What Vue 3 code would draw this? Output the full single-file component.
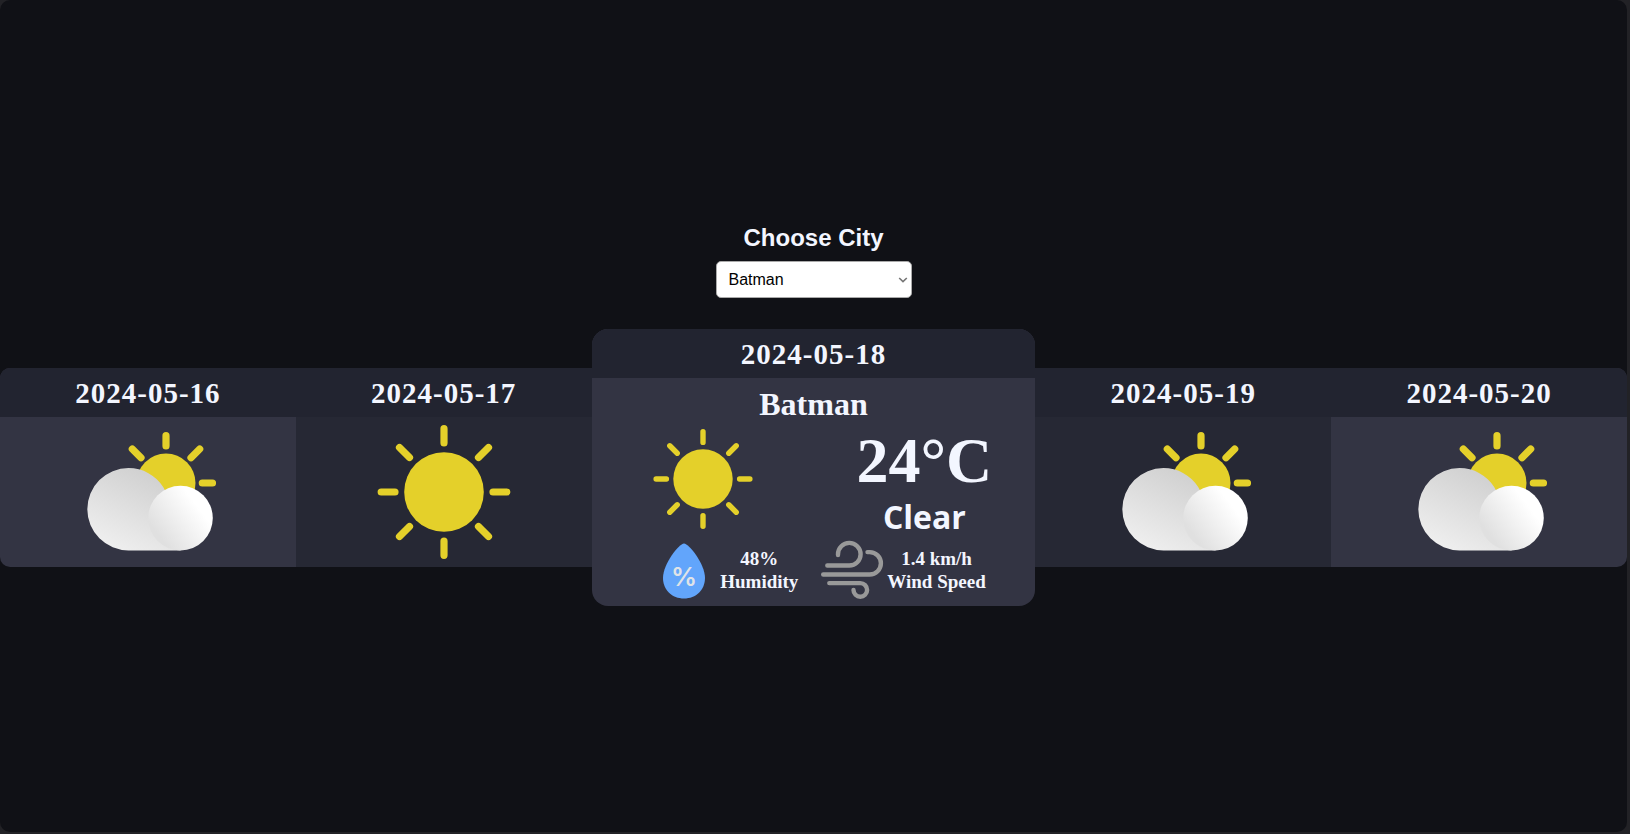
<script setup>
import { ref } from 'vue'

const cities = ['Batman', 'Ankara', 'Istanbul', 'Izmir']
const city = ref('Batman')

const days = [
  { date: '2024-05-16', icon: 'cloudy' },
  { date: '2024-05-17', icon: 'sunny' },
  { date: '2024-05-18', icon: 'sunny', current: true },
  { date: '2024-05-19', icon: 'cloudy' },
  { date: '2024-05-20', icon: 'cloudy' },
]
</script>

<template>
  <div class="frame">
    <main class="page">
      <label class="title" for="city">Choose City</label>
      <div class="select-wrap">
        <select id="city" v-model="city" class="city-select">
          <option v-for="name in cities" :key="name" :value="name">{{ name }}</option>
        </select>
        <svg class="chevron" viewBox="0 0 10 6" aria-hidden="true">
          <path d="M1.200 1L5 4.600L8.800 1" fill="none" stroke="#767676" stroke-width="1.6" />
        </svg>
      </div>

      <section class="forecast">
        <article v-for="day in days" :key="day.date" class="day" :class="{ current: day.current }">
          <header class="day-header">{{ day.date }}</header>
          <div class="day-body">
            <h1 v-if="day.current" class="city-name">{{ city }}</h1>
            <div class="conditions">
              <svg v-if="day.icon === 'sunny'" class="weather-icon" viewBox="0 0 150 150" aria-hidden="true">
                <circle cx="75" cy="75" r="39.800" fill="#e4d02a" />
                <path
                  d="M75 11.7V26M75 124V138.3M12.2 75H26M124 75H137.8M30.5 30.5L40.5 40.5M109.5 109.5L119.5 119.5M119.5 30.5L109.5 40.5M40.5 109.5L30.5 119.5"
                  fill="none" stroke="#e4d02a" stroke-width="7.2" stroke-linecap="round" />
              </svg>
              <svg v-else class="weather-icon" viewBox="0 0 150 150" aria-hidden="true">
                <defs>
                  <linearGradient :id="'back-' + day.date" x1="0.1" y1="1" x2="0.65" y2="0">
                    <stop offset="0" stop-color="#f2f2f2" />
                    <stop offset="1" stop-color="#cfcfcf" />
                  </linearGradient>
                  <linearGradient :id="'front-' + day.date" x1="0.15" y1="0.75" x2="0.75" y2="0.3">
                    <stop offset="0" stop-color="#e0e0e0" />
                    <stop offset="1" stop-color="#ffffff" />
                  </linearGradient>
                </defs>
                <circle cx="93" cy="66" r="29.5" fill="#e4d02a" />
                <path d="M93 18.7V29M129.3 66H139.5M126.7 32L118 40.7M59.3 32L68 40.7" fill="none" stroke="#e4d02a" stroke-width="7.2" stroke-linecap="round" />
                <path d="M55.5 51A41.2 41.2 0 0 0 55.5 133.4H107.5V110H92.6A41.2 41.2 0 0 0 55.5 51Z" :fill="`url(#back-${day.date})`" />
                <circle cx="107.5" cy="101.1" r="32.3" :fill="`url(#front-${day.date})`" />
              </svg>
              <div v-if="day.current" class="reading">
                <div class="temperature">24°C</div>
                <div class="summary">Clear</div>
              </div>
            </div>
            <div v-if="day.current" class="details">
              <div class="detail">
                <svg class="detail-icon" viewBox="0 0 62 62" aria-hidden="true">
                  <path d="M31 4.500C36 4.500 52 25 52 39C52 51 43 59.500 31 59.500S10 51 10 39C10 25 26 4.500 31 4.500Z" fill="#62a5fb" />
                  <text x="31" y="47" text-anchor="middle" class="percent">%</text>
                </svg>
                <p class="detail-text">48%<br />Humidity</p>
              </div>
              <div class="detail">
                <svg class="detail-icon" viewBox="0 0 62 62" aria-hidden="true">
                  <path
                    d="M7.3 26.5H29.3A11.3 11.3 0 1 0 18 15.2V16M3.2 35.5H49.7A11.2 11.2 0 0 0 49.7 13.1H47.5M9.3 44.1H40.3A6.8 6.8 0 1 1 33.5 50.9"
                    fill="none" stroke="#999" stroke-width="4.4" stroke-linecap="round" />
                </svg>
                <p class="detail-text">1.4 km/h<br />Wind Speed</p>
              </div>
            </div>
          </div>
        </article>
      </section>
    </main>
  </div>
</template>

<style>
body {
  margin: 0;
  background: #222226;
}
</style>

<style scoped>
.frame {
  box-sizing: border-box;
  display: flex;
  min-height: 100vh;
  padding: 0 3px 2px 0;
}
.page {
  flex: 1;
  display: flex;
  flex-direction: column;
  align-items: center;
  justify-content: center;
  padding-bottom: 2px;
  border-radius: 10px;
  background: #101116;
  color: #f3f6ff;
  font-family: "Liberation Serif", "Times New Roman", serif;
  font-weight: bold;
}
.title {
  margin-bottom: 9px;
  font-family: "Liberation Sans", Arial, sans-serif;
  font-size: 24px;
  line-height: 28px;
}
.select-wrap {
  position: relative;
  margin-bottom: 31px;
}
.city-select {
  display: block;
  appearance: none;
  width: 196px;
  height: 37px;
  padding: 8px 24px 8px 12px;
  border: 1px solid #aaa;
  border-radius: 5px;
  background: #fff;
  color: #000;
  font-family: "Liberation Sans", Arial, sans-serif;
  font-size: 16px;
}
.chevron {
  position: absolute;
  top: 16px;
  right: 4px;
  width: 10px;
  height: 6px;
  pointer-events: none;
}
.forecast {
  display: flex;
  align-items: center;
  width: 100%;
}
.day {
  flex: 1 1 0;
  min-width: 0;
  overflow: hidden;
  background: #333443;
}
.day:nth-child(even) {
  background: #262834;
}
.day:first-child {
  border-radius: 10px 0 0 10px;
}
.day:last-child {
  border-radius: 0 10px 10px 0;
}
.day.current {
  flex-grow: 1.5;
  border-radius: 16px;
}
.day-header {
  padding: 9px 8px 7px;
  background: #222430;
  font-size: 29px;
  line-height: 33px;
  letter-spacing: 1px;
  text-align: center;
}
.conditions {
  display: flex;
  justify-content: center;
}
.weather-icon {
  display: block;
  width: 150px;
  height: 150px;
}
.current .day-body {
  padding: 8px 0 4px;
}
.city-name {
  margin: 0;
  font-size: 32px;
  line-height: 37px;
  text-align: center;
}
.current .conditions {
  display: grid;
  grid-template-columns: 1fr 1fr;
  place-items: center;
}
.current .weather-icon {
  width: 112px;
  height: 112px;
}
.reading {
  text-align: center;
}
.temperature {
  font-size: 64px;
  line-height: 74px;
}
.summary {
  font-family: "Open Sans", "Noto Sans", sans-serif;
  font-size: 32px;
  line-height: 37px;
}
.details {
  display: flex;
  justify-content: center;
  gap: 22px;
  padding: 4px 0 1px 12px;
}
.detail {
  display: flex;
  align-items: center;
  gap: 5px;
}
.detail-icon {
  width: 62px;
  height: 62px;
  overflow: visible;
}
.percent {
  fill: #dfe3e8;
  font-family: Inter, "Open Sans", sans-serif;
  font-size: 26px;
  font-weight: 600;
}
.detail-text {
  margin: 0;
  font-size: 19px;
  line-height: 23px;
  text-align: center;
}
</style>
